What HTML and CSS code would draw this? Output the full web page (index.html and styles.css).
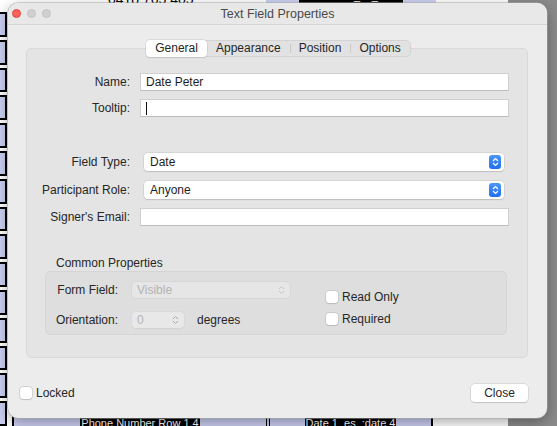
FILE: index.html
```html
<!DOCTYPE html>
<html>
<head>
<meta charset="utf-8">
<link rel="stylesheet" href="styles.css">
</head>
<body>
<div class="desk">
  <div class="back">
    <div class="back-left">
      <div class="cell"></div><div class="cell"></div><div class="cell"></div><div class="cell"></div><div class="cell"></div>
      <div class="cell"></div><div class="cell"></div><div class="cell"></div><div class="cell"></div><div class="cell"></div>
      <div class="cell"></div><div class="cell"></div><div class="cell"></div><div class="cell"></div><div class="cell"></div>
    </div>
    <div class="back-main">
      <div class="back-top">
        <span class="phone">0418 765 405</span>
        <span class="top-field"><span class="tag">Date Sveta_es_:date</span></span>
      </div>
      <div class="back-bottom">
        <span class="bfield f1"><span class="tag">Phone Number Row 1.4</span></span>
        <span class="bfield f2"><span class="tag">Date 1_es_:date 4</span></span>
      </div>
    </div>
    <div class="back-gray"></div>
  </div>

  <div class="dialog">
    <div class="titlebar">
      <div class="lights">
        <span class="light red"></span><span class="light"></span><span class="light"></span>
      </div>
      <div class="title">Text Field Properties</div>
    </div>
    <div class="body">
      <div class="tabs">
        <span class="tab sel">General</span><span class="tab">Appearance</span><span class="tab sep">Position</span><span class="tab sep">Options</span>
      </div>
      <div class="panel">
        <div class="form">
          <label class="lbl">Name:</label>
          <div class="input">Date Peter</div>
          <label class="lbl">Tooltip:</label>
          <div class="input"><span class="caret"></span></div>
          <div class="spacer"></div>
          <label class="lbl">Field Type:</label>
          <div class="popup">Date<span class="stepper"><svg width="7" height="10" viewBox="0 0 7 10"><path d="M1 4 L3.5 1.5 L6 4 M1 6 L3.5 8.5 L6 6" fill="none" stroke="#fff" stroke-width="1.2"/></svg></span></div>
          <label class="lbl">Participant Role:</label>
          <div class="popup">Anyone<span class="stepper"><svg width="7" height="10" viewBox="0 0 7 10"><path d="M1 4 L3.5 1.5 L6 4 M1 6 L3.5 8.5 L6 6" fill="none" stroke="#fff" stroke-width="1.2"/></svg></span></div>
          <label class="lbl">Signer's Email:</label>
          <div class="input"></div>
        </div>
        <div class="group-title">Common Properties</div>
        <div class="group">
          <div class="gcol">
            <div class="grow">
              <span class="glbl">Form Field:</span>
              <span class="dpopup wide">Visible<svg class="dchev" width="7" height="10" viewBox="0 0 7 10"><path d="M1 4 L3.5 1.5 L6 4 M1 6 L3.5 8.5 L6 6" fill="none" stroke="#c4c4c4" stroke-width="1"/></svg></span>
            </div>
            <div class="grow">
              <span class="glbl">Orientation:</span>
              <span class="dpopup narrow">0<svg class="dchev" width="7" height="10" viewBox="0 0 7 10"><path d="M1 4 L3.5 1.5 L6 4 M1 6 L3.5 8.5 L6 6" fill="none" stroke="#a8a8a8" stroke-width="1"/></svg></span>
              <span class="deg">degrees</span>
            </div>
          </div>
          <div class="checks">
            <div class="check"><span class="box"></span>Read Only</div>
            <div class="check"><span class="box"></span>Required</div>
          </div>
        </div>
      </div>
      <div class="footer">
        <div class="check locked"><span class="box"></span>Locked</div>
        <span class="button">Close</span>
      </div>
    </div>
  </div>
</div>
</body>
</html>
```
FILE: styles.css
```css
* { box-sizing: border-box; }
html, body { margin: 0; padding: 0; }
body {
  width: 557px; height: 426px; overflow: hidden;
  font-family: "Liberation Sans", Arial, sans-serif;
  font-size: 12px; color: #262626;
}
.desk { position: relative; width: 557px; height: 426px; background: #fff; overflow: hidden; }

/* background window */
.back { display: flex; height: 100%; }
.back-left { width: 8px; display: flex; flex-direction: column; padding-top: 12px; gap: 3px; }
.cell { height: 25px; width: 7px; background: #cbcff1; border: 2px solid #000; border-left: none; }
.back-main { width: 500px; display: flex; flex-direction: column; justify-content: space-between; }
.back-top { height: 10px; position: relative; }
.phone { position: absolute; left: 100px; top: -9px; font-size: 14px; color: #000; }
.top-field { position: absolute; left: 258px; top: -10px; width: 170px; height: 13px; background: #cdd1f2; display: flex; justify-content: center; }
.tag { background: #000; color: #fff; font-size: 11px; line-height: 13px; padding: 0 1px; }
.back-bottom { height: 10px; display: flex; }
.bfield { height: 12px; background: #cbcff1; display: flex; justify-content: center; align-items: flex-start; padding-top: 1px; }
.f1 { width: 258px; margin-left: 4px; border-left: 2px solid #000; border-right: 4px double #000; }
.f2 { width: 163px; border-right: 2px solid #000; }
.back-gray { flex: 1; background: #8b8b8b; }

/* dialog */
.dialog {
  position: absolute; left: 8px; top: 3px; width: 539px; height: 415px;
  background: #ececec; border-radius: 10px;
  box-shadow: 0 0 0 0.5px #a9a9a9, 0 4px 14px rgba(0,0,0,0.35);
  display: flex; flex-direction: column; overflow: hidden;
}
.titlebar {
  height: 22px; flex: none; position: relative;
  border-bottom: 1px solid #d5d5d5; background: #e8e8e8;
  display: flex; align-items: center; justify-content: center;
}
.lights { position: absolute; left: 4px; top: 6px; display: flex; gap: 6px; }
.light { width: 9px; height: 9px; border-radius: 50%; background: #d0d0d0; border: 0.5px solid #c3c3c3; }
.light.red { background: #fe5f57; border-color: #e14640; }
.title { font-size: 12.5px; color: #4a4a4a; padding-top: 1px; }

.body { flex: 1; display: flex; flex-direction: column; padding: 0 19px 0 18px; }
.tabs {
  align-self: center; margin-top: 15px; margin-left: 3px; position: relative; z-index: 1;
  display: flex; height: 17px; background: #e2e2e2; border: 1px solid #d3d3d3; border-radius: 5px;
}
.tab { padding: 0 9px; line-height: 15px; font-size: 12px; color: #262626; position: relative; }
.tab.sel { background: #fff; border-radius: 4px; box-shadow: 0 0 0 0.5px #c8c8c8, 0 1px 1px rgba(0,0,0,0.15); padding: 0 9px; margin: -1px 0 -1px -1px; line-height: 17px; }
.tab.sep::before { content: ""; position: absolute; left: 0; top: 3px; height: 9px; border-left: 1px solid #cbcbcb; }

.panel {
  margin-top: -9px; height: 310px; flex: none;
  background: #e4e4e4; border: 1px solid #d9d9d9; border-radius: 5px;
  padding: 24px 18px 0 0;
}
.form {
  display: grid; grid-template-columns: 103px 1fr; column-gap: 10px; row-gap: 8px;
  align-items: center;
}
.lbl { text-align: right; font-size: 12px; color: #262626; }
.input {
  height: 18px; background: #fff; border: 1px solid #cfcfcf; border-bottom-color: #bdbdbd;
  padding: 0 5px; line-height: 16px; font-size: 12px; color: #1e1e1e; display: flex; align-items: center;
}
.caret { width: 1px; height: 13px; background: #111; }
.spacer { grid-column: 1 / 3; height: 19px; }
.popup {
  height: 18px; margin: 1px 5px 1px 4px; background: #fff; border-radius: 4px;
  box-shadow: 0 0 0 0.5px #c6c6c6, 0 1px 1px rgba(0,0,0,0.18);
  padding: 0 3px 0 6px; display: flex; align-items: center; justify-content: space-between;
  font-size: 12px; color: #1e1e1e;
}
.stepper {
  width: 12px; height: 14px; border-radius: 3px;
  background: linear-gradient(#4b95f8, #1f6ff2);
  display: flex; align-items: center; justify-content: center;
}
.group-title { margin: 30px 0 0 29px; font-size: 12px; color: #262626; line-height: 14px; }
.group {
  margin: 1px 0 0 18px; height: 64px; width: 462px;
  background: #dedede; border: 1px solid #d5d5d5; border-radius: 5px;
  display: flex; padding-top: 10px;
}
.gcol { display: flex; flex-direction: column; gap: 14px; width: 280px; }
.grow { display: flex; align-items: center; }
.glbl { width: 72px; text-align: right; font-size: 12px; color: #262626; }
.dpopup {
  margin-left: 14px; height: 16px; border-radius: 4px; background: #e6e6e6;
  box-shadow: 0 0 0 0.5px #d0d0d0; padding: 0 5px;
  display: flex; align-items: center; justify-content: space-between;
  font-size: 12px; color: #b3b3b3;
}
.dpopup.wide { width: 158px; }
.dpopup.narrow { width: 52px; background: #e8e8e8; box-shadow: 0 0 0 0.5px #d6d6d6, 0 1px 1px rgba(0,0,0,0.06); }
.deg { margin-left: 13px; }
.checks { display: flex; flex-direction: column; gap: 7px; padding-top: 7px; }
.check { display: flex; align-items: center; gap: 4px; font-size: 12px; color: #262626; height: 15px; }
.box { width: 12px; height: 12px; background: #fff; border-radius: 3px; box-shadow: 0 0 0 0.5px #b9b9b9, 0 0.5px 1px rgba(0,0,0,0.15); }

.footer { display: flex; justify-content: space-between; align-items: center; margin: 26px 0 0 -6px; }
.button {
  width: 57px; height: 18px; margin-right: 0; background: #fff; border-radius: 4px;
  box-shadow: 0 0 0 0.5px #c8c8c8, 0 1px 1px rgba(0,0,0,0.18);
  text-align: center; line-height: 18px; font-size: 12px; color: #262626;
}
```
